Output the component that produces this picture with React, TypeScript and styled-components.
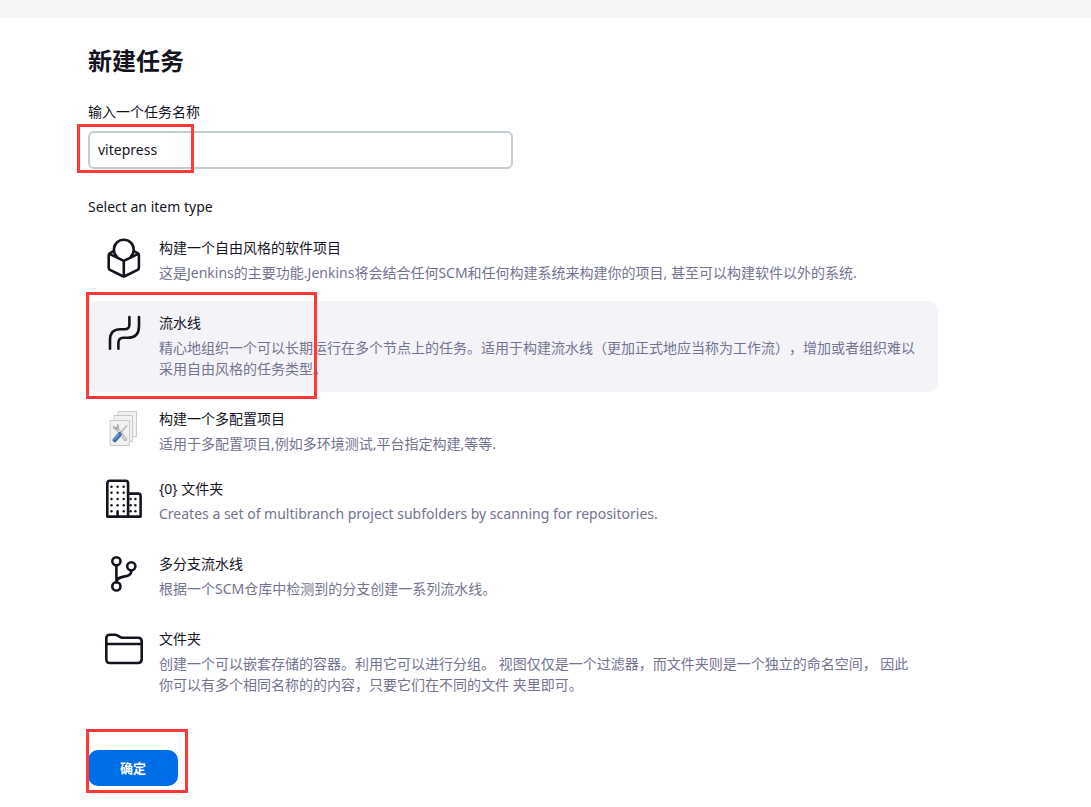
import React from "react";
import styled, { createGlobalStyle, css } from "styled-components";

const GlobalStyle = createGlobalStyle`
  *, *::before, *::after { box-sizing: border-box; }
  body {
    margin: 0;
    background: #fff;
    color: #14141f;
    font-family: "Noto Sans", "Noto Sans CJK SC", sans-serif;
    font-size: 14px;
    line-height: 21px;
    text-spacing-trim: space-all;
  }
`;

const TopBar = styled.div`
  height: 18px;
  background: #f5f5f8;
`;

const Form = styled.form`
  max-width: 938px;
  padding: 25px 0 20px 88px;
`;

const Title = styled.h1`
  margin: 0 0 22px;
  font-size: 24px;
  line-height: 36px;
  font-weight: 700;
`;

const Label = styled.label`
  display: block;
  margin-bottom: 9px;
`;

const Marked = styled.div`
  position: relative;
  width: fit-content;
  max-width: 100%;
`;

const Mark = styled.span<{ $top: number; $left: number; $width: number; $height: number }>`
  position: absolute;
  top: ${(p) => p.$top}px;
  left: ${(p) => p.$left}px;
  width: ${(p) => p.$width}px;
  height: ${(p) => p.$height}px;
  border: 3px solid #ff3838;
  pointer-events: none;
`;

const NameInput = styled.input`
  display: block;
  width: 425px;
  max-width: 100%;
  height: 38px;
  padding: 0 8px 2px;
  border: 2px solid #c3ccd1;
  border-radius: 6px;
  background: #fff;
  color: inherit;
  font: inherit;
  outline: none;
`;

const ItemTypes = styled.fieldset`
  margin: 27px 0 0;
  padding: 0;
  border: 0;
  min-width: 0;
`;

const Legend = styled.legend`
  margin-bottom: 9px;
  padding: 0;
`;

const ItemList = styled.div`
  display: flex;
  flex-direction: column;
  gap: 5px;
`;

const Item = styled.label<{ $selected?: boolean; $compact?: boolean }>`
  position: relative;
  display: flex;
  align-items: flex-start;
  gap: 15px;
  padding: ${(p) => (p.$compact ? "11px 16px 8px" : "11px 16px 13px")};
  border-radius: 10px;
  cursor: pointer;
  ${(p) =>
    p.$selected &&
    css`
      background: #f3f3f8;
    `}
`;

const Radio = styled.input`
  position: absolute;
  opacity: 0;
  pointer-events: none;
`;

const Icon = styled.svg`
  flex: none;
  width: 40px;
  height: 40px;
  margin-top: 1px;
  fill: none;
  stroke: #14141f;
  stroke-width: 2.6;
  stroke-linecap: round;
  stroke-linejoin: round;
`;

const ItemText = styled.span`
  display: flex;
  flex-direction: column;
  gap: 4px;
  min-width: 0;
`;

const ItemName = styled.span`
  display: block;
`;

const ItemDescription = styled.span`
  display: block;
  color: #737390;
`;

const Footer = styled(Marked)`
  margin-top: 42px;
`;

const SubmitButton = styled.button`
  display: block;
  width: 90px;
  height: 36px;
  padding: 0;
  border: 0;
  border-radius: 10px;
  background: #006ee6;
  color: #fff;
  font: inherit;
  font-size: 13px;
  font-weight: 700;
  cursor: pointer;
`;

const FreestyleIcon = () => (
  <Icon viewBox="0 0 40 40" aria-hidden="true">
    <path d="M12.6 18.4A9.9 9.9 0 1 1 27 18.4" />
    <path d="M9.2 13.4L6 15.2Q4.7 16 4.7 17.4V29.4Q4.7 31 6 31.8L18.4 38Q19.8 38.7 21.2 38L33.6 31.8Q34.9 31 34.9 29.4V17.4Q34.9 16 33.6 15.2L30.4 13.4" />
    <path d="M5.4 15.8L19.8 22.9L34.2 15.8M19.8 22.9V38.2" />
  </Icon>
);

const PipelineIcon = () => (
  <Icon viewBox="0 0 40 40" aria-hidden="true">
    <path d="M6 35.8V26.8Q6 16.2 16.6 16.2H20.6Q25.4 16.2 25.4 11.4V4" />
    <path d="M35 4V13Q35 24.8 24 24.8H19.4Q14.4 24.8 14.4 30V35.8" />
  </Icon>
);

const MultiConfigIcon = () => (
  <Icon viewBox="0 0 40 40" aria-hidden="true">
    <g fill="#f1f1ef" stroke="#c9cac7" strokeWidth="1">
      <rect x="14.5" y="2.5" width="18" height="25" />
      <rect x="10.5" y="6.5" width="18" height="26" />
      <rect x="6.5" y="11.5" width="19" height="25" />
    </g>
    <path d="M12.5 19L21.5 30.5" stroke="#a4a7a6" strokeWidth="3" />
    <path d="M12.8 19.2L21.4 30.2" stroke="#e0e2e1" strokeWidth="1.4" />
    <path d="M9.6 17.4Q9.8 20.6 13 20.2M13.6 15.8Q15 18.4 13.6 20" stroke="#a4a7a6" strokeWidth="1.4" />
    <path d="M16 24.4L22.6 17" stroke="#b7bcc0" strokeWidth="1.8" />
    <path d="M10.8 31L15.6 25.4" stroke="#3f6fb0" strokeWidth="4.4" />
    <path d="M10.4 30.2L14.6 25.4" stroke="#82a7d8" strokeWidth="1.2" />
  </Icon>
);

const dots = [
  ...[7.7, 13.8, 20, 26.2, 32.3].flatMap((y) => [7.5, 13.6, 19.7].map((x) => [x, y])),
  ...[20, 26.2, 32.3].flatMap((y) => [26.6, 31.4].map((x) => [x, y])),
].filter(([x, y]) => !(x === 13.6 && y === 32.3));

const OrganizationIcon = () => (
  <Icon viewBox="0 0 40 40" aria-hidden="true">
    <path d="M3.3 37.6V4.4Q3.3 1.8 5.9 1.8H21.5Q24.1 1.8 24.1 4.4V37.6Z" />
    <path d="M24.1 14.6H34.2Q36.6 14.6 36.6 17V37.6H24.1M13.6 32.4V37.6" />
    <g fill="#14141f" stroke="none">
      {dots.map(([x, y]) => (
        <circle key={`${x}-${y}`} cx={x} cy={y} r="1.2" />
      ))}
    </g>
  </Icon>
);

const BranchIcon = () => (
  <Icon viewBox="0 0 40 40" aria-hidden="true">
    <circle cx="12.4" cy="7.3" r="4.1" />
    <circle cx="27.3" cy="12.3" r="4.1" />
    <circle cx="12.4" cy="32.4" r="4.1" />
    <path d="M12.4 11.4V28.3M27.3 16.4C27.3 25.6 13 19.8 12.4 28" />
  </Icon>
);

const FolderIcon = () => (
  <Icon viewBox="0 0 40 40" aria-hidden="true">
    <path d="M2.3 15V9.4Q2.3 5.7 6 5.7H10.9Q12.4 5.7 13.6 6.5L15.8 7.9Q17 8.7 18.5 8.7H34Q37.7 8.7 37.7 12.4V30.3Q37.7 34 34 34H6Q2.3 34 2.3 30.3V15H37.7" />
  </Icon>
);

type ItemType = {
  id: string;
  name: string;
  description: string;
  icon: React.FC;
  compact?: boolean;
};

const itemTypes: ItemType[] = [
  {
    id: "freestyle",
    name: "构建一个自由风格的软件项目",
    description:
      "这是Jenkins的主要功能.Jenkins将会结合任何SCM和任何构建系统来构建你的项目, 甚至可以构建软件以外的系统.",
    icon: FreestyleIcon,
  },
  {
    id: "pipeline",
    name: "流水线",
    description:
      "精心地组织一个可以长期运行在多个节点上的任务。适用于构建流水线（更加正式地应当称为工作流），增加或者组织难以采用自由风格的任务类型。",
    icon: PipelineIcon,
  },
  {
    id: "matrix",
    name: "构建一个多配置项目",
    description: "适用于多配置项目,例如多环境测试,平台指定构建,等等.",
    icon: MultiConfigIcon,
    compact: true,
  },
  {
    id: "organization",
    name: "{0} 文件夹",
    description: "Creates a set of multibranch project subfolders by scanning for repositories.",
    icon: OrganizationIcon,
  },
  {
    id: "multibranch",
    name: "多分支流水线",
    description: "根据一个SCM仓库中检测到的分支创建一系列流水线。",
    icon: BranchIcon,
  },
  {
    id: "folder",
    name: "文件夹",
    description:
      "创建一个可以嵌套存储的容器。利用它可以进行分组。 视图仅仅是一个过滤器，而文件夹则是一个独立的命名空间， 因此你可以有多个相同名称的的内容，只要它们在不同的文件 夹里即可。",
    icon: FolderIcon,
  },
];

export default function App() {
  const [name, setName] = React.useState("vitepress");
  const [selected, setSelected] = React.useState("pipeline");

  return (
    <>
      <GlobalStyle />
      <TopBar />
      <main>
        <Form onSubmit={(e) => e.preventDefault()}>
          <Title>新建任务</Title>
          <Label htmlFor="name">输入一个任务名称</Label>
          <Marked>
            <NameInput id="name" type="text" value={name} onChange={(e) => setName(e.target.value)} />
            <Mark $top={-7} $left={-11} $width={117} $height={49} />
          </Marked>
          <ItemTypes>
            <Legend>Select an item type</Legend>
            <ItemList>
              {itemTypes.map(({ id, name: itemName, description, icon: ItemIcon, compact }) => (
                <Item key={id} $selected={id === selected} $compact={compact}>
                  <Radio
                    type="radio"
                    name="itemType"
                    value={id}
                    checked={id === selected}
                    onChange={() => setSelected(id)}
                  />
                  <ItemIcon />
                  <ItemText>
                    <ItemName>{itemName}</ItemName>
                    <ItemDescription>{description}</ItemDescription>
                  </ItemText>
                  {id === "pipeline" && <Mark $top={-9} $left={-2} $width={231} $height={107} />}
                </Item>
              ))}
            </ItemList>
          </ItemTypes>
          <Footer>
            <SubmitButton type="submit">确定</SubmitButton>
            <Mark $top={-21} $left={-2} $width={102} $height={64} />
          </Footer>
        </Form>
      </main>
    </>
  );
}
